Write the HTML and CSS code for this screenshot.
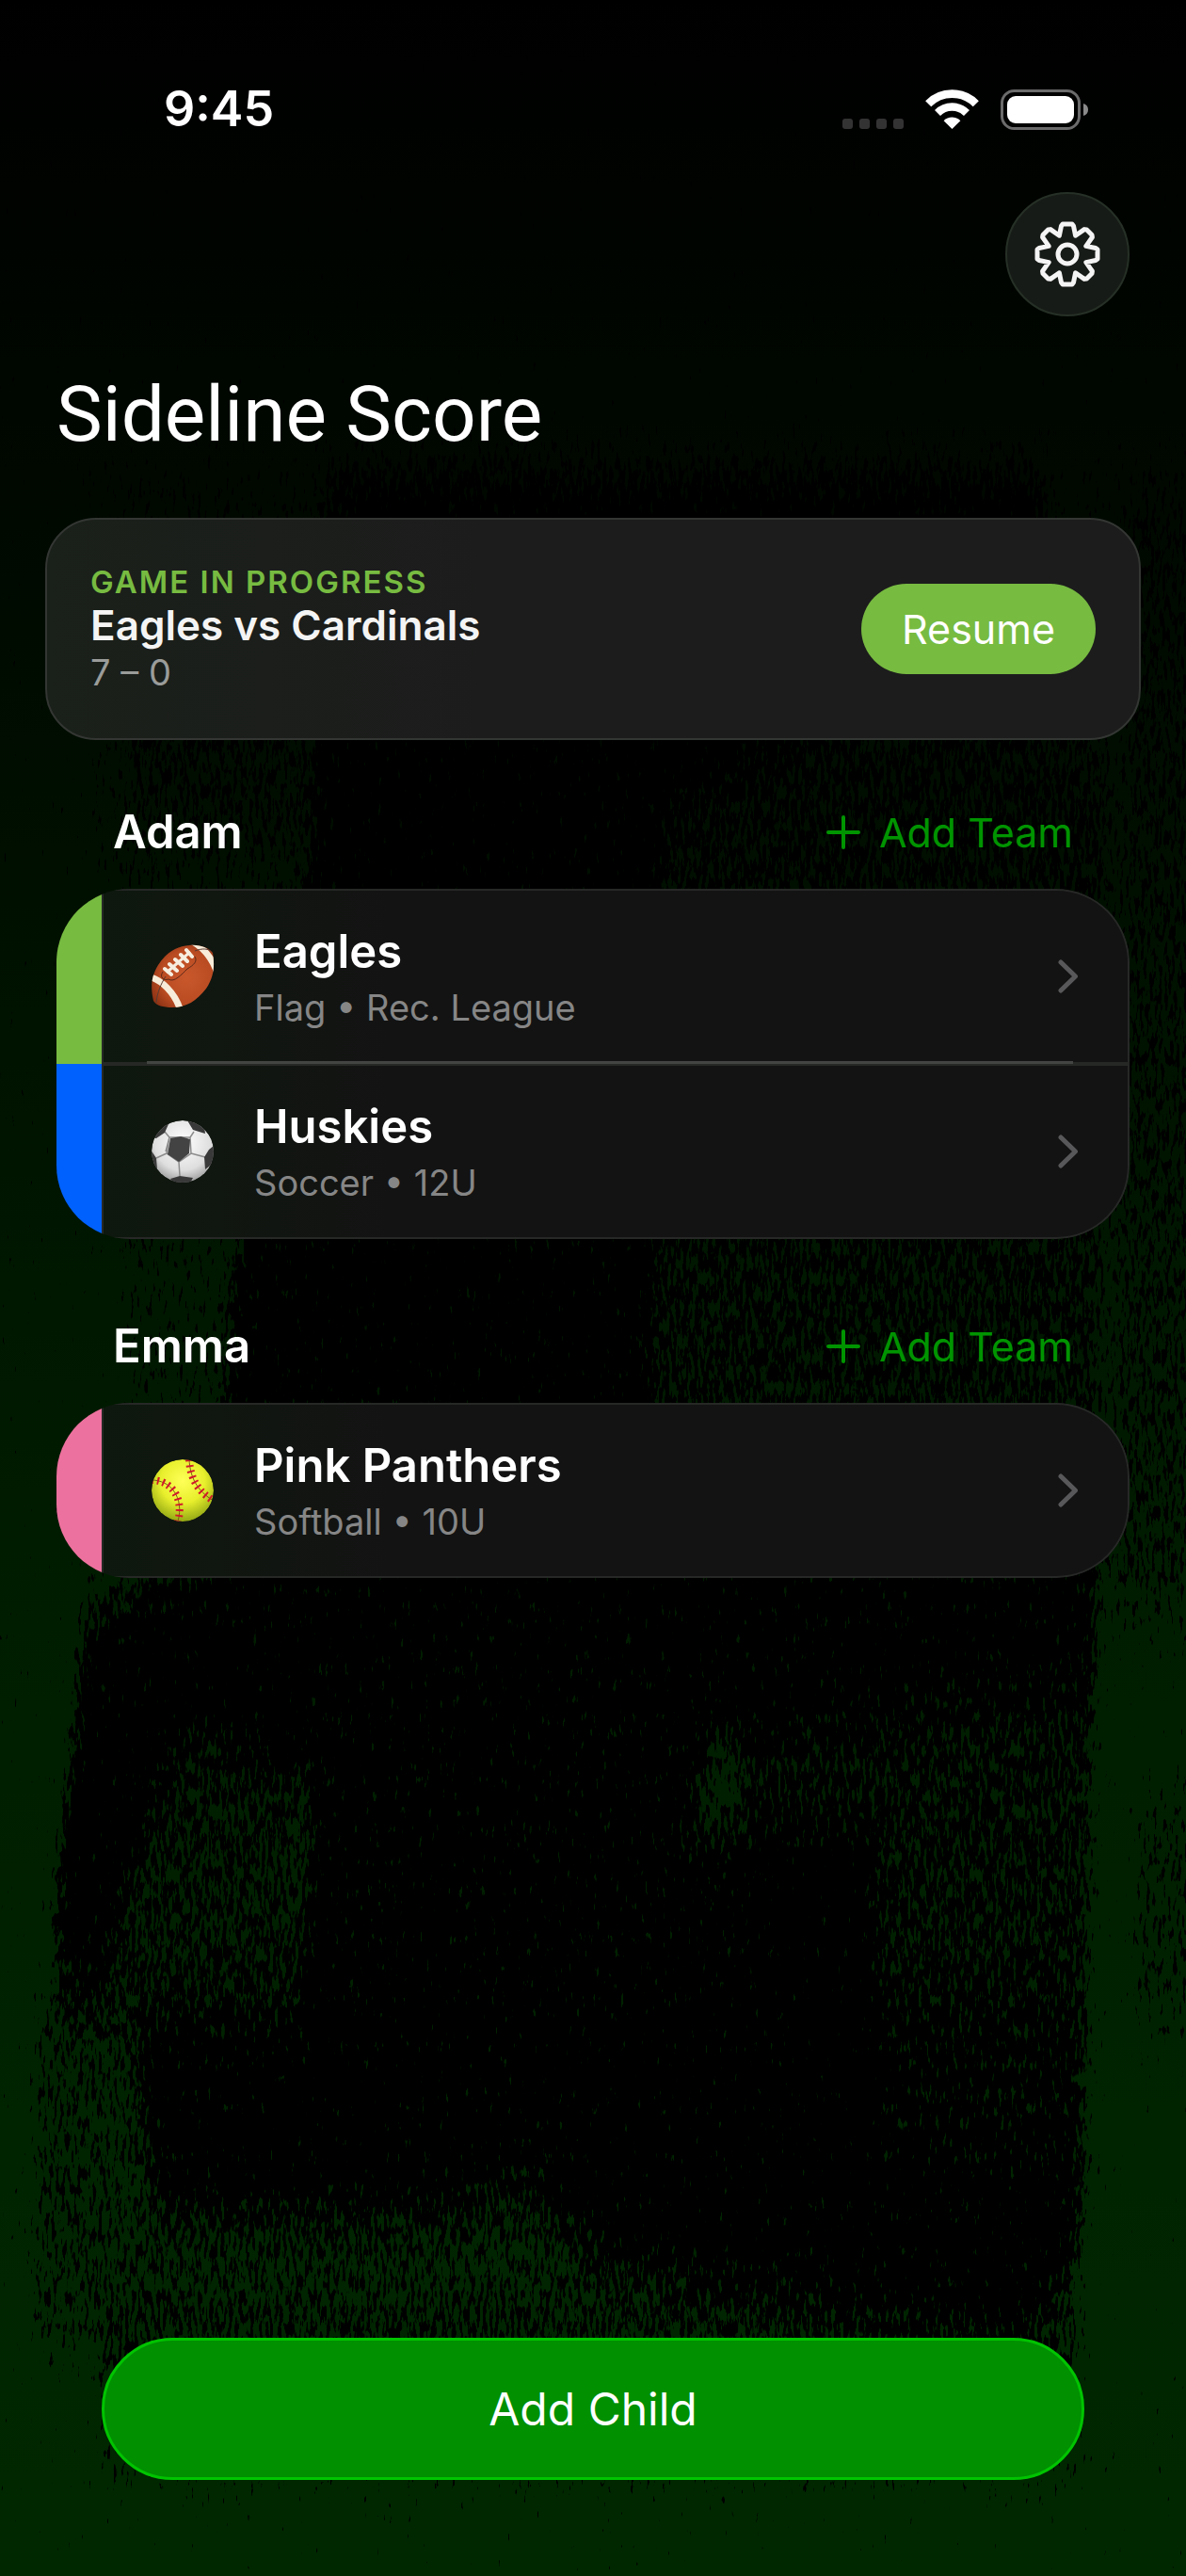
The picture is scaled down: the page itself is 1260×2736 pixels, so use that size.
FILE: index.html
```html
<!DOCTYPE html>
<html lang="en">
<head>
  <meta charset="UTF-8">
  <meta name="viewport" content="width=device-width, initial-scale=1.0">
  <title>Sideline Score</title>
  <link rel="stylesheet" href="styles.css">
</head>
<body>
  <!-- brushed turf background -->
  <svg class="turf" viewBox="0 0 1260 2736" preserveAspectRatio="none" aria-hidden="true">
    <defs>
      <filter id="brush" filterUnits="userSpaceOnUse" x="-60" y="-60" width="1380" height="2856" color-interpolation-filters="sRGB">
        <feGaussianBlur in="SourceGraphic" stdDeviation="9 34" result="soft"/>
        <feTurbulence type="fractalNoise" baseFrequency="0.3 0.06" numOctaves="4" seed="7"/>
        <feColorMatrix values="0 0 0 0 0  0 0 0 0 0  0 0 0 0 0  1 0 0 0 0" result="grain"/>
        <feComposite in="soft" in2="grain" operator="arithmetic" k2="1" k3="1.7" k4="-0.85"/>
        <feColorMatrix values="0 0 0 0 0  0 0 0 0 0  0 0 0 0 0  0 0 0 9 -4"/>
      </filter>
    </defs>
    <g filter="url(#brush)" transform="skewX(-1)">
      <path fill-opacity=".25" d="M80 480H1300V1700H180Z"/>
      <path fill-opacity=".25" d="M1210 500H1360V1760H1210Z"/>
      <path fill-opacity=".35" d="M1240 1900H1340V2160H1240Z"/>
      <path fill-opacity=".3" d="M150 560H350V900H150Z"/>
      <path fill-opacity=".4" d="M75 2120H1185V2500H75Z"/>
      <path fill-opacity=".38" d="M150 2460H1195V2630H150Z"/>
      <path fill-opacity=".52" d="M180 1760H350V2140H100V1900Z"/>
      <path fill-opacity=".42" d="M700 780H1190V1720H700Z"/>
      <path fill-opacity=".88" d="M355 500H1120V760H900L715 860V1660H1195V1800H1100L800 1850L760 1930L960 1950L980 2300L1190 2320V2400L1120 2480L680 2400L600 2320L520 2350L210 2350L180 2150H350L363 1900L240 1830L190 1920L140 2120L90 2080L120 1700L260 1650L270 1380L350 900Z"/>
      <path fill-opacity=".6" d="M790 1800H1195V2340H940Z"/>
    </g>
  </svg>

  <div class="screen">
    <div class="status-bar">
      <span class="time">9:45</span>
      <div class="status-icons">
        <svg width="65" height="43" viewBox="0 0 65 43" fill="#333">
          <rect y="31" width="11" height="11" rx="3"/>
          <rect x="18" y="31" width="11" height="11" rx="3"/>
          <rect x="36" y="31" width="11" height="11" rx="3"/>
          <rect x="54" y="31" width="11" height="11" rx="3"/>
        </svg>
        <svg width="57" height="43" viewBox="0 0 57 43" fill="none" stroke="#fff">
          <path d="M3.2 15.2A35.6 35.6 0 0 1 53.8 15.2" stroke-width="8.6"/>
          <path d="M13 25A21.8 21.8 0 0 1 44 25" stroke-width="8.4"/>
          <path d="M28.5 42L19.6 33.2A12.4 12.4 0 0 1 37.4 33.2Z" fill="#fff" stroke="none"/>
        </svg>
        <svg width="93" height="43" viewBox="0 0 93 43">
          <rect x="1.5" y="1.5" width="82" height="40" rx="13" fill="none" stroke="#6b6b6b" stroke-width="3"/>
          <rect x="7" y="7" width="71" height="29" rx="9" fill="#fff"/>
          <path d="M88 15C91.500 16 93 18.500 93 21.500S91.500 27 88 28Z" fill="#8a8a8a"/>
        </svg>
      </div>
    </div>

    <div class="toolbar">
      <button class="settings" type="button" aria-label="Settings">
        <svg width="70" height="70" viewBox="-35 -35 70 70" fill="none" stroke="#f4f4f4" stroke-width="5" stroke-linejoin="round">
          <path d="M-5-32H5L6.500-30 8.600-19.800 18-26.400 20.500-26 26-20.500 26.400-18 19.800-8.600 30-6.500 32-5V5L30 6.500 19.800 8.600 26.400 18 26 20.500 20.500 26 18 26.400 8.600 19.800 6.500 30 5 32H-5L-6.500 30-8.600 19.800-18 26.400-20.500 26-26 20.500-26.400 18-19.800 8.600-30 6.500-32 5V-5L-30-6.500-19.800-8.600-26.400-18-26-20.500-20.500-26-18-26.400-8.600-19.800-6.500-30Z"/>
          <circle r="10"/>
        </svg>
      </button>
    </div>

    <h1>Sideline Score</h1>

    <div class="game-card">
      <div>
        <div class="game-label">GAME IN PROGRESS</div>
        <div class="game-title">Eagles vs Cardinals</div>
        <div class="game-score">7 – 0</div>
      </div>
      <button class="resume" type="button">Resume</button>
    </div>

    <section class="child">
      <div class="child-header">
        <h2>Adam</h2>
        <button class="add-team" type="button">
          <svg width="36" height="36" viewBox="0 0 36 36" stroke="#009400" stroke-width="4" stroke-linecap="round"><path d="M18 2V34M2 18H34"/></svg>
          Add Team
        </button>
      </div>
      <div class="teams">
        <a class="team" href="#">
          <span class="team-color lime"></span>
          <span class="team-body">
            <svg class="ball" width="76" height="68" viewBox="-5 -1 76 68">
              <defs>
                <radialGradient id="leather" cx=".55" cy=".5" r=".6"><stop offset="0" stop-color="#c9582c"/><stop offset=".65" stop-color="#b94b22"/><stop offset="1" stop-color="#8b3113"/></radialGradient>
                <clipPath id="football"><path d="M40 0C52-1 61 3 65 8C67 20 67 33 58 46C48 59 37 66 22 66C12 66 5 64 2 59C-1 46-1 34 7 21C15 8 27 1 40 0Z"/></clipPath>
              </defs>
              <g clip-path="url(#football)" fill="none">
                <path fill="url(#leather)" d="M-2-2H70V70H-2Z"/>
                <path d="M-4 33C10 36 25 50 31 70M40-6C52 0 64 11 70 30" stroke="#f7ecd9" stroke-width="7"/>
                <path d="M5 61C6 50 10 41 15 33M46 6C54 3 60 3 66 8" stroke="#593b32"/>
                <path d="M12 28C8 34 13 38 18 36M18 36C24 40 32 31 38 25C45 21 49 17 46 12" stroke="#5c2a1b" stroke-width="1"/>
                <path d="M16 29L41 7" stroke="#f6eee0" stroke-width="3"/>
                <path d="M14 25L21 31M19 20L27 27M25 15L33 22M31 10L38 17M37 5L43 12" stroke="#f6eee0" stroke-width="4" stroke-linecap="round"/>
              </g>
            </svg>
            <span class="team-info">
              <span class="team-name">Eagles</span>
              <span class="team-detail">Flag • Rec. League</span>
            </span>
            <svg width="22" height="36" viewBox="0 0 22 36" fill="none" stroke="#58585a" stroke-width="5" stroke-linecap="round" stroke-linejoin="round"><path d="M3 3L18.500 18L3 33"/></svg>
          </span>
        </a>
        <a class="team" href="#">
          <span class="team-color blue"></span>
          <span class="team-body">
            <svg class="ball" width="76" height="68" viewBox="-5 -1 76 68">
              <defs>
                <radialGradient id="white" cx=".5" cy=".35" r=".65"><stop offset="0" stop-color="#fff"/><stop offset=".7" stop-color="#dedede"/><stop offset="1" stop-color="#a0a0a0"/></radialGradient>
                <clipPath id="round"><circle cx="33" cy="33" r="33"/></clipPath>
              </defs>
              <g clip-path="url(#round)">
                <circle cx="33" cy="33" r="33" fill="url(#white)"/>
                <path d="M19 18L15 33M41 18L45 12M19 18L14 12M42 35L57 39M16 35L5 40M29 44L30 59M19 18H41L42 35L29 44L16 35Z" stroke="#8c8c8c" stroke-width="1.500" fill="none"/>
                <path d="M20 19L31 17L41 20L40 35L29 44L17 36Z" fill="#434343"/>
                <path d="M38 0L44 10L57 14L56 5ZM0 18L5 19L14 13L18 4L5 5ZM66 27L61 31L56 39L57 52L66 45ZM-1 31L5 40L6 52L-1 48ZM20 62L30 59L44 61L40 68H24Z" fill="#393939"/>
              </g>
            </svg>
            <span class="team-info">
              <span class="team-name">Huskies</span>
              <span class="team-detail">Soccer • 12U</span>
            </span>
            <svg width="22" height="36" viewBox="0 0 22 36" fill="none" stroke="#58585a" stroke-width="5" stroke-linecap="round" stroke-linejoin="round"><path d="M3 3L18.500 18L3 33"/></svg>
          </span>
        </a>
      </div>
    </section>

    <section class="child">
      <div class="child-header">
        <h2>Emma</h2>
        <button class="add-team" type="button">
          <svg width="36" height="36" viewBox="0 0 36 36" stroke="#009400" stroke-width="4" stroke-linecap="round"><path d="M18 2V34M2 18H34"/></svg>
          Add Team
        </button>
      </div>
      <div class="teams">
        <a class="team" href="#">
          <span class="team-color pink"></span>
          <span class="team-body">
            <svg class="ball" width="76" height="68" viewBox="-5 -1 76 68">
              <defs>
                <radialGradient id="optic" cx=".5" cy=".35" r=".65"><stop offset="0" stop-color="#ffff58"/><stop offset=".55" stop-color="#e8ef2c"/><stop offset="1" stop-color="#94a915"/></radialGradient>
                <clipPath id="round2"><circle cx="33" cy="33" r="33"/></clipPath>
              </defs>
              <g clip-path="url(#round2)" fill="none">
                <circle cx="33" cy="33" r="33" fill="url(#optic)"/>
                <path d="M0 22C20 22 35 40 28 66M40 0C41 20 49 34 66 44" stroke="#7c5a18"/>
                <path d="M0 22C20 22 35 40 28 66M40 0C41 20 49 34 66 44" stroke="#d0192b" stroke-width="8" stroke-dasharray="2 4"/>
              </g>
            </svg>
            <span class="team-info">
              <span class="team-name">Pink Panthers</span>
              <span class="team-detail">Softball • 10U</span>
            </span>
            <svg width="22" height="36" viewBox="0 0 22 36" fill="none" stroke="#58585a" stroke-width="5" stroke-linecap="round" stroke-linejoin="round"><path d="M3 3L18.500 18L3 33"/></svg>
          </span>
        </a>
      </div>
    </section>

    <button class="add-child" type="button">Add Child</button>
  </div>
</body>
</html>
```
FILE: styles.css
```css
* {
  box-sizing: border-box;
}

body {
  margin: 0;
  background: linear-gradient(#000 0%, #000500 12%, #001000 35%, #001c00 60%, #002400 85%, #002800 100%);
  color: #fff;
  font-family: Inter, "Liberation Sans", sans-serif;
}

button {
  border: 0;
  padding: 0;
  background: none;
  color: inherit;
  font: inherit;
  cursor: pointer;
}

h1,
h2 {
  margin: 0;
}

svg {
  display: block;
  flex: none;
}

.turf {
  position: absolute;
  top: 0;
  left: 0;
  width: 100%;
  height: 100%;
}

.screen {
  position: relative;
  display: flex;
  flex-direction: column;
  min-height: 100vh;
  padding-bottom: 102px;
}

.status-bar {
  display: flex;
  justify-content: space-between;
  align-items: center;
  padding: 84px 104px 0 174px;
}

.time {
  font-size: 52px;
  line-height: 64px;
  font-weight: 600;
}

.status-icons {
  display: flex;
  gap: 23px;
}

.toolbar {
  display: flex;
  justify-content: flex-end;
  padding: 56px 60px 0;
}

.settings {
  display: flex;
  align-items: center;
  justify-content: center;
  width: 132px;
  height: 132px;
  border: 2px solid #263026;
  border-radius: 50%;
  background: #171b17;
}

h1 {
  margin: 48px 60px 54px;
  font-family: Roboto, "Liberation Sans", sans-serif;
  font-size: 82px;
  line-height: 112px;
  font-weight: 400;
}

.game-card {
  display: flex;
  justify-content: space-between;
  align-items: center;
  margin: 0 48px;
  padding: 46px;
  border: 2px solid #333633;
  border-radius: 54px;
  background: linear-gradient(90deg, #1a201a, #1c1c1c 40%);
}

.game-label {
  color: #77bb41;
  font-size: 33px;
  line-height: 40px;
  font-weight: 600;
  letter-spacing: 2px;
}

.game-title {
  color: #f4f4f4;
  font-size: 44px;
  line-height: 52px;
  font-weight: 600;
}

.game-score {
  color: #9a9c9a;
  font-size: 38px;
  line-height: 48px;
}

.resume {
  padding: 0 43px;
  border-radius: 48px;
  background: #77bb41;
  font-size: 43px;
  line-height: 96px;
}

.child {
  padding: 0 60px;
  margin-top: 66px;
}

.child + .child {
  margin-top: 82px;
}

.child-header {
  display: flex;
  justify-content: space-between;
  align-items: center;
  padding: 0 60px;
  margin-bottom: 28px;
}

h2,
.team-name {
  font-size: 49px;
  line-height: 64px;
  font-weight: 600;
}

.add-team {
  display: flex;
  align-items: center;
  gap: 20px;
  color: #009400;
  font-size: 43px;
  line-height: 64px;
}

.teams {
  border-radius: 78px;
  overflow: hidden;
}

.team {
  display: flex;
  color: inherit;
  text-decoration: none;
}

.team-color {
  width: 48px;
}

.lime {
  background: #77bb41;
}

.blue {
  background: #0061ff;
}

.pink {
  background: #ed719e;
}

.team-body {
  position: relative;
  flex: 1;
  display: flex;
  align-items: center;
  height: 186px;
  padding: 0 54px 0 48px;
  background: linear-gradient(90deg, #0e180e, #131313 28%);
  box-shadow: inset 0 0 0 2px #262826;
}

.team:first-child .team-body {
  border-top-right-radius: 78px;
}

.team:last-child .team-body {
  border-bottom-right-radius: 78px;
}

.team:not(:last-child) .team-body::after {
  content: "";
  position: absolute;
  left: 48px;
  right: 60px;
  bottom: 0;
  height: 3px;
  background: #434543;
}

.team-info {
  flex: 1;
  display: flex;
  flex-direction: column;
  margin-left: 38px;
  padding-top: 6px;
}

.team-name {
  line-height: 60px;
}

.team-detail {
  color: #868686;
  font-size: 38px;
  line-height: 58px;
}

.add-child {
  margin: auto 108px 0;
  border: 3px solid #00c400;
  border-radius: 76px;
  background: #009000;
  font-size: 48px;
  line-height: 145px;
}
```
